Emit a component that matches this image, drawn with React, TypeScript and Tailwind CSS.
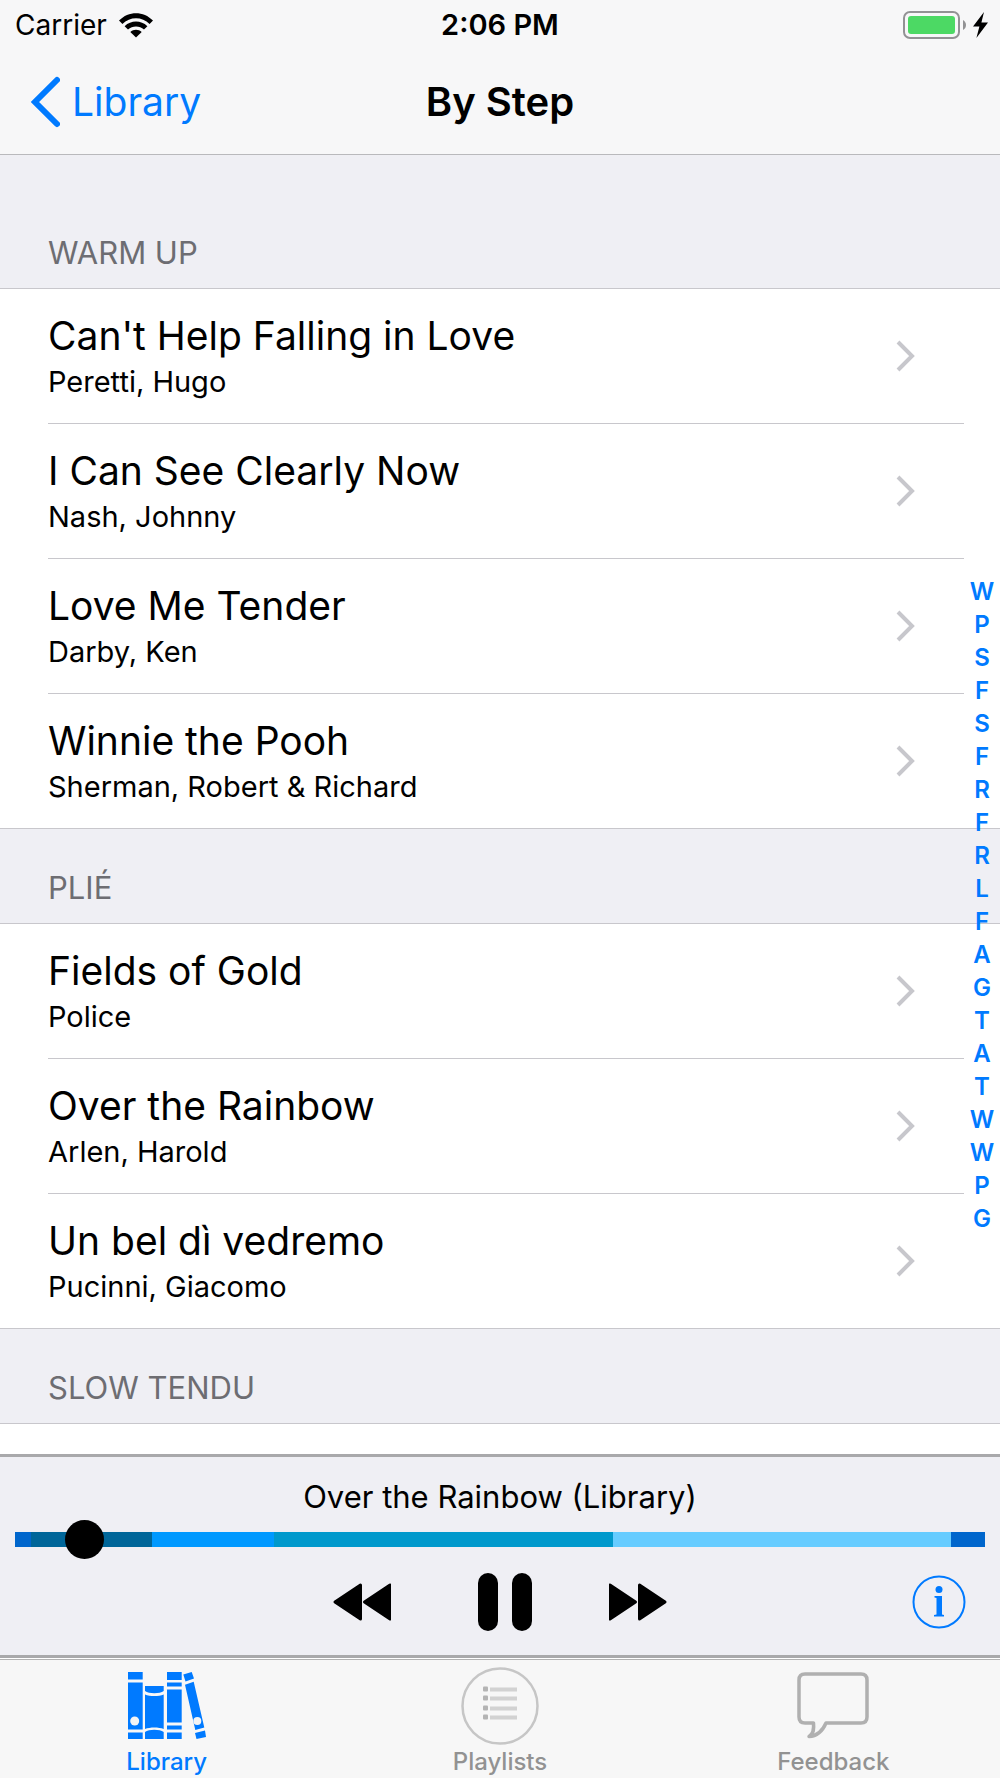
import { useState } from 'react';
import clsx from 'clsx';

type Song = { title: string; composer: string };
type Section = { name: string; songs: Song[] };

const SECTIONS: Section[] = [
  {
    name: 'WARM UP',
    songs: [
      { title: "Can't Help Falling in Love", composer: 'Peretti, Hugo' },
      { title: 'I Can See Clearly Now', composer: 'Nash, Johnny' },
      { title: 'Love Me Tender', composer: 'Darby, Ken' },
      { title: 'Winnie the Pooh', composer: 'Sherman, Robert & Richard' },
    ],
  },
  {
    name: 'PLIÉ',
    songs: [
      { title: 'Fields of Gold', composer: 'Police' },
      { title: 'Over the Rainbow', composer: 'Arlen, Harold' },
      { title: 'Un bel dì vedremo', composer: 'Pucinni, Giacomo' },
    ],
  },
  { name: 'SLOW TENDU', songs: [] },
];

const INDEX = 'WPSFSFRFRLFAGTATWWPG'.split('');

// length is the share of the track, in thousandths
const PARTS = [
  { color: '#0066cc', length: 16 },
  { color: '#006699', length: 125 },
  { color: '#0099ff', length: 126 },
  { color: '#0099cc', length: 349 },
  { color: '#66ccff', length: 349 },
  { color: '#0066cc', length: 35 },
];

function StatusBar() {
  return (
    <div className="grid grid-cols-3 items-center h-[50px] px-3">
      <div className="flex items-center gap-3 pl-[3px]">
        <span className="text-[28px] leading-9">Carrier</span>
        <svg width="34" height="25" viewBox="0 0 34 25" aria-hidden="true">
          <path d="M0 7.6C9.6-2.2 24.4-2.2 34 7.6L30.6 11C23 3.4 11 3.4 3.4 11Z" />
          <path d="M5.6 13.2c6.4-6.2 16.4-6.2 22.8 0L25 16.6c-4.4-4.2-11.6-4.2-16 0Z" />
          <path d="M11.3 18.9c3.2-3 8.2-3 11.4 0L17 24.5Z" />
        </svg>
      </div>
      <span className="text-center text-[29px] leading-9 font-semibold">2:06 PM</span>
      <div className="flex items-center justify-end gap-[7px]">
        <svg width="63" height="28" viewBox="0 0 63 28" aria-hidden="true">
          <rect x="1" y="1" width="55" height="26" rx="6" fill="none" stroke="#929294" strokeWidth="2" />
          <rect x="5" y="5" width="47" height="18" rx="3" fill="#4cd964" />
          <path d="M60 9c4 2 4 8 0 10Z" fill="#929294" />
        </svg>
        <svg width="15" height="26" viewBox="0 0 15 26" aria-hidden="true">
          <path d="M11 0L0 14.5h6.4L3.4 26 15 10.6H8.4Z" />
        </svg>
      </div>
    </div>
  );
}

function NavBar() {
  return (
    <div className="grid grid-cols-3 items-center h-[104px] px-[30px]">
      <a href="#library" className="flex items-center gap-3 text-[#007aff]">
        <svg width="30" height="52" viewBox="0 0 30 52" fill="none" stroke="currentColor" strokeWidth="6" strokeLinecap="round" aria-hidden="true">
          <path d="M27 4L5 26l22 22" />
        </svg>
        <span className="text-[39px] leading-[48px]">Library</span>
      </a>
      <h1 className="text-center text-[40px] leading-[48px] font-semibold">By Step</h1>
    </div>
  );
}

function SongRow({ song }: { song: Song }) {
  return (
    <li className="ml-12 mr-9 border-b border-[#c8c7cc] last:border-b-0">
      <a href="#song" className="flex items-center justify-between h-[134px] pr-[49px]">
        <span className="flex flex-col pt-[3px]">
          <span className="text-[39px] leading-[48px]">{song.title}</span>
          <span className="text-[29px] leading-[44px]">{song.composer}</span>
        </span>
        <svg width="19" height="32" viewBox="0 0 19 32" fill="none" stroke="#c7c7cc" strokeWidth="4" aria-hidden="true">
          <path d="M2 2l14 14L2 30" />
        </svg>
      </a>
    </li>
  );
}

function SongList() {
  return (
    <>
      {SECTIONS.map((section, i) => (
        <section key={section.name}>
          <h2
            className={clsx(
              'flex items-end px-12 pb-3 bg-[#efeff4] border-b border-[#c8c7cc] text-[31px] leading-[46px] text-[#6d6d72]',
              i === 0 ? 'h-[134px]' : 'h-[96px] border-t',
            )}
          >
            {section.name}
          </h2>
          <ul>
            {section.songs.map((song) => (
              <SongRow key={song.title} song={song} />
            ))}
          </ul>
        </section>
      ))}
    </>
  );
}

function Player() {
  const [position, setPosition] = useState(54);
  const [playing, setPlaying] = useState(true);

  return (
    <div className="bg-[#efeff4] border-y-3 border-[#a9a9ab] px-[15px]">
      <p className="pt-4 text-center text-[31px] leading-[48px]">Over the Rainbow (Library)</p>
      <div className="relative flex items-center h-[36px]">
        <div className="flex w-full h-[15px]">
          {PARTS.map((part, i) => (
            <div key={i} style={{ flexGrow: part.length, background: part.color }} />
          ))}
        </div>
        <input
          type="range"
          aria-label="Position"
          min={0}
          max={1000}
          value={position}
          onChange={(e) => setPosition(Number(e.target.value))}
          className="absolute inset-0 w-full h-full appearance-none bg-transparent [&::-webkit-slider-thumb]:appearance-none [&::-webkit-slider-thumb]:size-[39px] [&::-webkit-slider-thumb]:rounded-full [&::-webkit-slider-thumb]:bg-black"
        />
      </div>
      <div className="grid grid-cols-[1fr_auto_1fr] items-center h-[98px] pb-2">
        <div className="col-start-2 flex items-center gap-[77px]">
          <button type="button" aria-label="Rewind">
            <svg width="58" height="38" viewBox="0 0 58 38" stroke="black" strokeWidth="3" strokeLinejoin="round">
              <path d="M2 19L27.500 2v34ZM31.500 19L57 2v34Z" />
            </svg>
          </button>
          <button type="button" aria-label={playing ? 'Pause' : 'Play'} onClick={() => setPlaying((p) => !p)}>
            <svg width="64" height="58" viewBox="0 0 64 58">
              {playing ? (
                <>
                  <rect x="10" width="20" height="58" rx="10" />
                  <rect x="44" width="20" height="58" rx="10" />
                </>
              ) : (
                <path d="M14 2l46 27-46 27Z" />
              )}
            </svg>
          </button>
          <button type="button" aria-label="Fast forward">
            <svg width="58" height="38" viewBox="0 0 58 38" stroke="black" strokeWidth="3" strokeLinejoin="round">
              <path d="M56 19L30.500 2v34ZM26.500 19L1 2v34Z" />
            </svg>
          </button>
        </div>
        <button type="button" aria-label="Song info" className="justify-self-end mr-[19px] text-[#007aff]">
          <svg width="54" height="54" viewBox="0 0 54 54" fill="currentColor">
            <circle cx="27" cy="27" r="25.500" fill="none" stroke="currentColor" strokeWidth="2" />
            <circle cx="27" cy="14.500" r="3.500" />
            <path d="M22.500 21H30v18.500l2 .5v1.500H22V40l2.500-.5V23l-2-.5Z" />
          </svg>
        </button>
      </div>
    </div>
  );
}

function BooksIcon() {
  return (
    <svg width="78" height="68" viewBox="0 0 78 68" fill="currentColor" aria-hidden="true">
      <path d="M0 0h14.700v7.500H0ZM0 10.500h14.700v47H0ZM0 60.500h14.700V67H0Z" />
      <path d="M17 14h18.700v5c-4 3-14.700 3-18.700 0ZM17 22.500c5 2 13.700 2 18.700 0V57c-5-2-13.700-2-18.700 0ZM17 60c4-3 14.700-3 18.700 0v7H17Z" />
      <path d="M39 0h14.700v8H39ZM39 10.500h14.700v4H39ZM39 17.500h14.700v33H39ZM39 53.500h14.700v4H39ZM39 60.500h14.700V67H39Z" />
      <path d="M55.300 2.500L63.700 0 66 6.500 57.500 9.500ZM57 12.700l8.700-3L76.300 55.500l-9 2.500ZM67 61l10-2.500 1 6.500-9.500 2Z" />
      <circle cx="6.700" cy="49" r="4.500" fill="#f4f4f4" />
      <circle cx="69.300" cy="49" r="4" fill="#f4f4f4" />
    </svg>
  );
}

function PlaylistIcon() {
  return (
    <svg width="78" height="78" viewBox="0 0 78 78" aria-hidden="true">
      <circle cx="39" cy="39" r="37.500" fill="none" stroke="#c6c6c6" strokeWidth="2.500" />
      {[22, 31, 41, 50].map((y) => (
        <g key={y}>
          <rect x="22" y={y - 2.5} width="5" height="5" rx="1" fill="#b4b4b4" />
          <rect x="29" y={y - 1.5} width="27" height="4" fill="#d2d2d2" />
        </g>
      ))}
    </svg>
  );
}

function BubbleIcon() {
  return (
    <svg width="72" height="68" viewBox="0 0 72 68" fill="none" stroke="#b0b0b0" strokeWidth="3.500" strokeLinejoin="round" aria-hidden="true">
      <path d="M8 2h56q6 0 6 6v37q0 6-6 6H29c-3 7-8 13-17 13.500 5-3 5-8 4.500-13.500H8q-6 0-6-6V8q0-6 6-6Z" />
    </svg>
  );
}

const TABS = [
  { label: 'Library', Icon: BooksIcon },
  { label: 'Playlists', Icon: PlaylistIcon },
  { label: 'Feedback', Icon: BubbleIcon },
];

function TabBar() {
  return (
    <nav className="grid grid-cols-3 mt-px border-t border-[#b2b2b2] bg-[#f7f7f7]">
      {TABS.map(({ label, Icon }, i) => (
        <a key={label} href={`#${label.toLowerCase()}`} className={clsx('flex flex-col items-center pt-[6px]', i === 0 ? 'text-[#007aff]' : 'text-[#929292]')}>
          <span className="flex items-center h-[80px]">
            <Icon />
          </span>
          <span className="text-[24px] leading-8 font-medium">{label}</span>
        </a>
      ))}
    </nav>
  );
}

export default function App() {
  return (
    <div className="flex flex-col h-screen bg-white text-black font-['Inter',sans-serif]">
      <header className="bg-[#f7f7f8] border-b border-[#b9b9bc]">
        <StatusBar />
        <NavBar />
      </header>
      <main className="relative flex-1 min-h-0 overflow-hidden">
        <SongList />
        <div className="absolute inset-y-0 right-0 w-9 pt-[200px] flex flex-col justify-center items-center text-[24px] leading-[33px] font-semibold text-[#007aff]">
          {INDEX.map((letter, i) => (
            <a key={i} href="#section">{letter}</a>
          ))}
        </div>
      </main>
      <Player />
      <TabBar />
    </div>
  );
}
